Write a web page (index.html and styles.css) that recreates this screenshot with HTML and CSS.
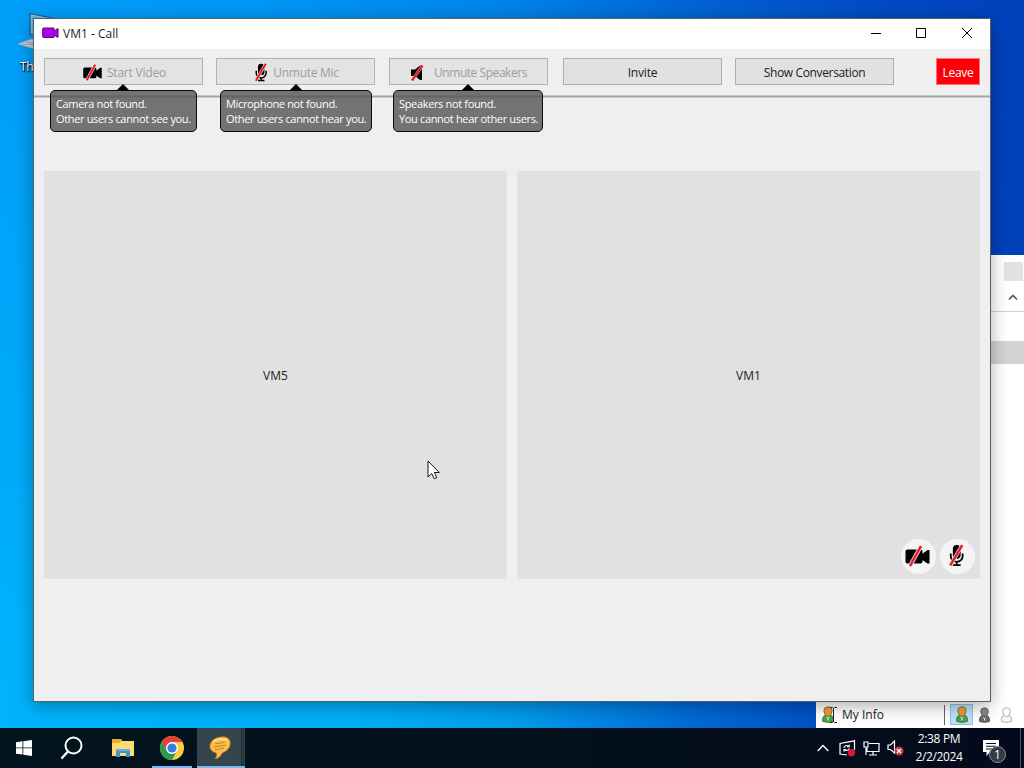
FILE: index.html
```html
<!DOCTYPE html>
<html lang="en">
<head>
<meta charset="utf-8">
<title>VM1 - Call</title>
<link rel="stylesheet" href="styles.css">
</head>
<body>
<svg class="defs" width="0" height="0" aria-hidden="true">
  <symbol id="cam-off" viewBox="0 0 24 22">
    <rect x="0" y="4.5" width="17" height="14" rx="2"/>
    <path d="M16 9.500 22 5h2v13.500h-2l-6-4z"/>
    <path d="M4.5 21 15.5 1" stroke="#f6dada" stroke-width="4.2"/>
    <path d="M4.5 21 15.5 1" stroke="#df1f2d" stroke-width="2.5"/>
  </symbol>
  <symbol id="mic-off" viewBox="0 0 16 22">
    <rect x="4.5" y="1" width="7.5" height="13" rx="3.7"/>
    <path d="M2.5 9v2.5a5.7 5.7 0 0 0 11.4 0V9M8.2 17v3M4.5 20.3h7.5" fill="none" stroke="#000" stroke-width="1.7"/>
    <path d="M2 20.5 13.5 1" stroke="#f6dada" stroke-width="3.6"/>
    <path d="M2 20.5 13.5 1" stroke="#df1f2d" stroke-width="2.3"/>
  </symbol>
  <symbol id="spk-off" viewBox="0 0 16 18">
    <path d="M1 5.500h4L10 1.500h2V16h-2l-5-4H1z"/>
    <path d="M2 16.5 12.5 1.5" stroke="#f6dada" stroke-width="3"/>
    <path d="M2 16.5 12.5 1.5" stroke="#df1f2d" stroke-width="2.3"/>
  </symbol>
  <symbol id="person" viewBox="0 0 14 17">
    <path class="torso" d="M1.500 15.500V12.500Q2 9.500 5 9h4q3 .5 3.500 3.500v3Q7 17.500 1.500 15.500z" stroke-width=".7"/>
    <path class="face" d="M2.800 4.500Q3 .8 7 .7t4.200 3.800Q11 9.500 7 10.500 3 9.500 2.800 4.500z" stroke-width=".7"/>
    <path d="m5.500 11 1.500 1.300L8.500 11M7 12.500v2" stroke="#fff" fill="none"/>
  </symbol>
</svg>

<div class="desktop">
  <div class="shortcut">
    <svg width="36" height="44" viewBox="0 0 36 44">
      <path d="M12 2.500 34 7v20l-22-4z" fill="#74bfeb" stroke="#1c5689" stroke-width="1.200"/>
      <path d="M14 5 32 9v14l-18-3z" fill="#5aaee4"/>
      <path d="M0 33 13 28l20 5-13 6z" fill="#c9d3da" stroke="#8fa9bc" stroke-width=".8"/>
      <path d="m4 33 22 2M8 31l20 3" stroke="#8296a6" stroke-width=".8"/>
    </svg>
    <span>This PC</span>
  </div>

  <section class="contacts">
    <div class="contacts-top">
      <div class="scroll-stub"></div>
      <svg class="chevron" width="10" height="7" viewBox="0 0 10 7"><path d="m1 5.500 4-4 4 4" fill="none" stroke="#555" stroke-width="1.700"/></svg>
    </div>
    <div class="contacts-row"></div>
    <div class="contacts-list"></div>
    <div class="my-info">
      <svg class="who online" width="14" height="17"><use href="#person"/></svg>
      <svg class="caret" width="7" height="16" viewBox="0 0 7 16"><path d="M0 .5h2.500l1 1 1-1H7M3.500 1v14M0 15.500h2.500l1-1 1 1H7" fill="none" stroke="#222"/></svg>
      <span class="my-label">My Info</span>
      <div class="status-set">
        <span class="status selected"><svg class="who online" width="14" height="17"><use href="#person"/></svg></span>
        <span class="status"><svg class="who away" width="13" height="16" viewBox="0 0 14 17"><use href="#person"/></svg></span>
        <span class="status"><svg class="who offline" width="13" height="16" viewBox="0 0 14 17"><use href="#person"/></svg></span>
      </div>
    </div>
  </section>

  <main class="call">
    <header class="titlebar">
      <svg width="17" height="12" viewBox="0 0 17 12"><path d="M1.500 1h10.500v3L16 1.500v9L12 8v2.500H1.500Q.7 10.500.7 9.500V2Q.7 1 1.500 1z" fill="#b000ef" stroke="#42106a" stroke-width="1"/></svg>
      <span class="title">VM1 - Call</span>
      <svg class="controls" width="104" height="12" viewBox="0 0 104 12" fill="none" stroke="#000"><path d="M1 6.500h10M46.500 1.500h9v9h-9zM92 1l10 10M102 1 92 11"/></svg>
    </header>
    <nav class="toolbar">
      <div class="slot video">
        <button class="btn off"><svg width="19" height="17"><use href="#cam-off"/></svg><span>Start Video</span></button>
        <div class="tip"><span>Camera not found.</span><span>Other users cannot see you.</span></div>
      </div>
      <div class="slot mic">
        <button class="btn off"><svg width="14" height="19"><use href="#mic-off"/></svg><span>Unmute Mic</span></button>
        <div class="tip"><span>Microphone not found.</span><span>Other users cannot hear you.</span></div>
      </div>
      <div class="slot speakers">
        <button class="btn off"><svg width="16" height="18"><use href="#spk-off"/></svg><span>Unmute Speakers</span></button>
        <div class="tip"><span>Speakers not found.</span><span>You cannot hear other users.</span></div>
      </div>
      <button class="btn invite"><span>Invite</span></button>
      <button class="btn convo"><span>Show Conversation</span></button>
      <button class="leave"><span>Leave</span></button>
    </nav>
    <div class="tiles">
      <div class="tile"><span>VM5</span></div>
      <div class="tile"><span>VM1</span>
        <div class="badges">
          <i><svg width="25" height="22"><use href="#cam-off"/></svg></i>
          <i><svg width="17" height="23"><use href="#mic-off"/></svg></i>
        </div>
      </div>
    </div>
  </main>

  <svg class="pointer" width="14" height="21" viewBox="0 0 14 21"><path d="M1 1v16l3.700-3.500 2.600 5.300 2.500-1.200-2.500-5.100h5z" fill="#fff" stroke="#111" stroke-width="1"/></svg>

  <footer class="taskbar">
    <span class="task"><svg width="16" height="16" viewBox="0 0 16 16" fill="#fff"><path d="M0 2.300 6.500 1.300v6.200H0zM7.300 1.200 16 0v7.500H7.300zM0 8.300h6.500v6.300L0 13.700zM7.300 8.300H16V16l-8.700-1.300z"/></svg></span>
    <span class="task"><svg width="24" height="24" viewBox="0 0 24 24" fill="none" stroke="#fff" stroke-width="2"><circle cx="13.500" cy="9.500" r="8"/><path d="M8 15.500 1.500 22.500" stroke-width="2.400"/></svg></span>
    <span class="task folder"><svg width="22" height="20" viewBox="0 0 22 20"><path d="M0 1.500Q0 1 1 1h8l1.500 2H22v15H0z" fill="#e8ad33"/><path d="M0 5h8l1.500-2H22v15H0z" fill="#ffda70"/><path d="M4 11h14v8h-4v-4H8v4H4z" fill="#3c94cf"/><path d="M4 11h14v2H4z" fill="#62b0df"/></svg></span>
    <span class="task running"><svg width="24" height="24" viewBox="0 0 24 24"><circle cx="12" cy="12" r="12" fill="#ffce44"/><path d="M1.600 6A12 12 0 0 1 22.400 6H12L7 15z" fill="#e34133"/><path d="M1.600 6A12 12 0 0 0 12 24l5-9-10 0z" fill="#279c51"/><circle cx="12" cy="12" r="6" fill="#fff"/><circle cx="12" cy="12" r="4.600" fill="#347de8"/></svg></span>
    <span class="task active"><svg width="22" height="24" viewBox="0 0 22 24"><path d="M12 1C19 0 22 4 21 9c-.8 4-4 6.500-8 8-1 3-3 5-7 6 1.500-2 2-4 1.500-6C3 16 .5 13 1 9.500 1.500 5 6 1.500 12 1z" fill="#f8c14a" stroke="#c97916" stroke-width=".8"/><path d="M4 5.500Q10 1.500 18 4" stroke="#ffe69a" fill="none" stroke-width="1.500"/><path d="m6 8 10-2M5 11l12-2M6 14l9-2" stroke="#b66a1a" fill="none" stroke-width=".8"/></svg></span>
    <div class="tray">
      <svg class="up" width="12" height="8" viewBox="0 0 12 8"><path d="m.7 7 5.300-5.500L11.300 7" fill="none" stroke="#fff" stroke-width="1.300"/></svg>
      <svg width="17" height="17" viewBox="0 0 17 17" fill="none" stroke="#fff" stroke-width="1.200"><path d="M8 15 1 14V3.500L15.500.8v9"/><path d="M4.800 8Q6 4.500 9.500 6M10.300 4.500v2.300H8M10.500 8.500q-1.500 3-4.700 1.500M5 11.800V9.500h2.300" stroke-width="1.100"/><circle cx="12.500" cy="12.800" r="3.700" fill="#dc143c" stroke="none"/></svg>
      <svg width="17" height="15" viewBox="0 0 17 15" fill="none" stroke="#fff" stroke-width="1.200"><path d="M6 2.500h10v8H4V7M10 10.500V14M6 14h8M1 1h4v5H1zM3 6v8"/></svg>
      <svg width="17" height="16" viewBox="0 0 17 16"><path d="M1 5h2.500L7.500 1v12L3.500 9.500H1z" fill="none" stroke="#fff" stroke-width="1.200"/><circle cx="12" cy="11" r="4.500" fill="#c9373d"/><path d="m10 9 4 4M14 9l-4 4" stroke="#fff" stroke-width="1.300"/></svg>
      <div class="clock"><span>2:38 PM</span><span>2/2/2024</span></div>
      <div class="notice"><svg width="17" height="17" viewBox="0 0 17 17"><path d="M0 0h16v12H7l-3.500 4v-4H0z" fill="#fff"/><path d="M3 3.500h10M3 6.300h10M3 9h6" stroke="#07131f" stroke-width="1.100"/></svg><b>1</b></div>
      <div class="peek"></div>
    </div>
  </footer>
</div>
</body>
</html>
```

FILE: styles.css
```css
* { box-sizing: border-box; }
body { margin: 0; overflow: hidden; font: 12px/15px "Open Sans", "Noto Sans", sans-serif; color: #1c1c1c; }
svg { display: block; flex: none; }
.defs { position: absolute; }
button { margin: 0; padding: 0; font: inherit; color: inherit; border-radius: 0; white-space: nowrap; }
span { white-space: nowrap; }

.desktop {
  position: relative; width: 1024px; height: 768px; overflow: hidden;
  display: flex; flex-direction: column; justify-content: flex-end;
  background: linear-gradient(90deg, #009ef8 0, #0096f2 25%, #0085e8 48%, #0060d0 70%, #004ac2 86%, #0040ba 100%);
}
.desktop::before {
  content: ""; position: absolute; inset: 0;
  background: linear-gradient(90deg, #00b3fb 0, #00aef6 35%, #009beb 50%, #006bd5 67%, #0052c4 79%, #0040b8 100%);
  mask-image: linear-gradient(transparent 5%, #000 90%);
}

.shortcut { position: absolute; left: 18px; top: 11px; color: #fff; }
.shortcut span { display: block; margin: 4px 0 0 2px; letter-spacing: -.4px; text-shadow: 0 1px 2px #000, 1px 1px 1px #000; }

.contacts {
  position: absolute; left: 816px; top: 255px; width: 208px; height: 473px;
  display: flex; flex-direction: column; background: #fff;
}
.contacts-top { height: 57px; border-bottom: 1px solid #d0d0d0; display: flex; flex-direction: column; align-items: flex-end; padding: 7px 1px 0 0; }
.scroll-stub { width: 19px; height: 19px; background: #e2e2e2; }
.chevron { margin: 13px 5px 0 0; }
.contacts-row { height: 52px; border-bottom: 23px solid #d3d3d3; }
.contacts-list { flex: 1; }
.my-info { height: 26px; display: flex; align-items: center; padding: 0 7px 1px 5px; }
.caret { margin-left: -5px; }
.my-label { margin-left: 5px; }
.status-set { margin-left: auto; height: 20px; border-left: 1px solid #666; display: flex; align-items: center; padding-left: 5px; }
.status { width: 23px; height: 21px; display: flex; align-items: center; justify-content: center; }
.status + .status { width: 22px; }
.status + .status + .status { width: 23px; margin-right: -1px; }
.selected { background: #bfe0f8; border: 1px solid #88c2ea; }
.online { fill: #3fa548; stroke: #4d6a2c; --face: #f39a36; }
.away { fill: #666; stroke: #444; --face: #858585; }
.offline { fill: #f5f5f5; stroke: #888; --face: #fff; }
.face { fill: var(--face); }

.call {
  position: absolute; left: 33px; top: 18px; width: 958px; height: 684px;
  display: flex; flex-direction: column; background: #efefef;
  border: 1px solid rgba(20, 35, 45, .7); box-shadow: 0 4px 16px rgba(0, 0, 0, .32);
}
.titlebar { height: 30px; background: #fff; display: flex; align-items: center; padding: 0 16px 2px 8px; }
.title { margin-left: 4px; }
.controls { margin-left: auto; }
.toolbar {
  height: 49px; padding: 9px 10px 0; display: flex; align-items: flex-start; gap: 13px;
  background: linear-gradient(#efefef 46px, #c9c9c9 46px, #c9c9c9 47px, #a3a3a3 47px, #a3a3a3 48px, #cecece 48px);
}
.slot { position: relative; }
.speakers { margin-left: 1px; }
.btn {
  width: 159px; height: 27px; padding-top: 2px; border: 1px solid #adadad; background: #e1e1e1;
  display: flex; align-items: center; justify-content: center; gap: 5px;
}
.off { color: #9c9c9c; background: #e3e3e3; border-color: #b2b2b2; }
.video .btn { padding-left: 2px; }
.video .btn span { letter-spacing: -.2px; }
.mic .btn { padding-left: 2px; }
.mic .btn span { letter-spacing: -.3px; }
.speakers .btn { gap: 8px; }
.speakers .btn span { letter-spacing: -.45px; }
.invite { margin-left: 2px; letter-spacing: -.2px; }
.convo { letter-spacing: -.35px; }
.leave { width: 44px; height: 27px; padding-top: 2px; margin-left: auto; border: 1px solid #ff7070; background: #fb0007; color: #fff; letter-spacing: -.3px; }
.tip {
  position: absolute; left: 6px; top: 32px; width: 147px; height: 42px; z-index: 1;
  display: flex; flex-direction: column; padding: 5px 0 0 5px;
  background: rgba(84, 84, 84, .8); border: 1px solid #0a0a0a; border-radius: 5px;
  color: #fff; font-size: 11px; letter-spacing: -.34px;
}
.tip::before {
  content: ""; position: absolute; left: 66px; top: -7px;
  border: 6px solid transparent; border-top: 0; border-bottom-color: #000;
}
.mic .tip { left: 4px; width: 152px; }
.mic .tip::before { left: 69px; }
.speakers .tip { left: 4px; width: 150px; }
.speakers .tip::before { left: 68px; }

.tiles { display: flex; gap: 10px; padding: 73px 10px 0; }
.tile { position: relative; flex: 1; height: 408px; background: #e1e1e1; display: flex; align-items: center; justify-content: center; }
.badges { position: absolute; right: 5px; bottom: 5px; display: flex; gap: 4px; }
.badges i { width: 35px; height: 35px; padding: 0 2px 2px 0; border-radius: 50%; background: #f4f4f4; display: flex; align-items: center; justify-content: center; }

.pointer { position: absolute; left: 427px; top: 460px; }

.taskbar { position: relative; height: 40px; background: linear-gradient(90deg, #03151e, #03101d 50%, #040a1b); display: flex; color: #fff; }
.task { width: 48px; height: 40px; display: flex; align-items: center; justify-content: center; }
.folder { padding-left: 5px; }
.running { width: 40px; margin-left: 8px; border-bottom: 2px solid #76b9ed; padding-top: 1px; }
.active { width: 48px; margin-left: 5px; padding: 2px 2px 0 0; border-bottom: 2px solid #76b9ed; background: linear-gradient(90deg, #35454e 44px, #1c2c35 44px, #1c2c35 45px, #2c3b44 45px); }
.tray { margin-left: auto; display: flex; align-items: center; }
.tray > svg { margin-right: 7px; }
.tray > .up { margin-right: 10px; }
.clock { width: 60px; display: flex; flex-direction: column; align-items: center; line-height: 18px; letter-spacing: -.35px; margin: 0 1px 0 -2px; padding-bottom: 1px; }
.notice { position: relative; width: 37px; margin-left: 13px; }
.notice b {
  position: absolute; left: 6px; top: 6px; width: 17px; height: 17px; border-radius: 50%;
  background: #333b43; border: 1px solid #8c9298; text-align: center; font-weight: 400; line-height: 15px;
}
.peek { width: 4px; height: 40px; border-left: 1px solid #505862; }
```
